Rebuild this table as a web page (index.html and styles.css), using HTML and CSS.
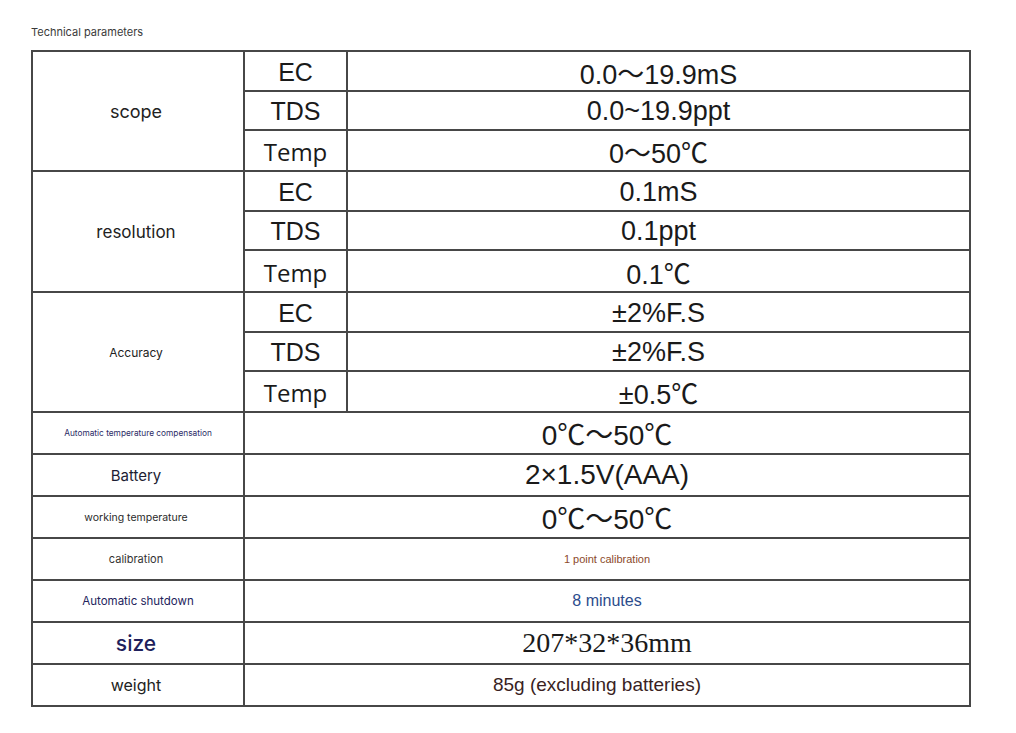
FILE: index.html
```html
<!DOCTYPE html>
<html>
<head>
<meta charset="utf-8">
<link rel="stylesheet" href="styles.css">
</head>
<body>
<div class="page">
  <div class="title">Technical parameters</div>
  <div class="spec">
    <div class="c lab g1 scope">scope</div>
    <div class="c key">EC</div><div class="c val v-arial">0.0～19.9mS</div>
    <div class="c key">TDS</div><div class="c val v-arial">0.0~19.9ppt</div>
    <div class="c key key-temp">Temp</div><div class="c val v-arial">0～50℃</div>

    <div class="c lab g2 resolution">resolution</div>
    <div class="c key">EC</div><div class="c val v-arial">0.1mS</div>
    <div class="c key">TDS</div><div class="c val v-arial">0.1ppt</div>
    <div class="c key key-temp">Temp</div><div class="c val v-arial">0.1℃</div>

    <div class="c lab g3 accuracy">Accuracy</div>
    <div class="c key">EC</div><div class="c val v-arial">±2%F.S</div>
    <div class="c key">TDS</div><div class="c val v-arial">±2%F.S</div>
    <div class="c key key-temp">Temp</div><div class="c val v-arial">±0.5℃</div>

    <div class="c lab atc">Automatic temperature compensation</div>
    <div class="c wide v-yahei">0℃～50℃</div>

    <div class="c lab battery">Battery</div>
    <div class="c wide v-yahei">2×1.5V(AAA)</div>

    <div class="c lab worktemp">working temperature</div>
    <div class="c wide v-yahei">0℃～50℃</div>

    <div class="c lab calib">calibration</div>
    <div class="c wide v-calib">1 point calibration</div>

    <div class="c lab shutdown">Automatic shutdown</div>
    <div class="c wide v-minutes">8 minutes</div>

    <div class="c lab size">size</div>
    <div class="c wide v-size">207*32*36mm</div>

    <div class="c lab weight">weight</div>
    <div class="c wide v-weight">85g (excluding batteries)</div>
  </div>
</div>
</body>
</html>
```
FILE: styles.css
```css
html, body {
  margin: 0;
  padding: 0;
  background: #ffffff;
}

.page {
  padding: 25px 0 0 31px;
}

.title {
  font-family: Inter, "Liberation Sans", sans-serif;
  font-size: 11px;
  line-height: 14px;
  color: #3a3a3a;
  margin-bottom: 11px;
}

.spec {
  display: grid;
  width: 940px;
  box-sizing: border-box;
  grid-template-columns: 210px 101px 621px;
  grid-template-rows: 38px 37px 39px 38px 37px 40px 38px 37px 39px 40px 40px 40px 40px 40px 40px 40px;
  gap: 2px;
  padding: 2px;
  background: #474747;
}

.c {
  background: #ffffff;
  display: flex;
  align-items: center;
  justify-content: center;
  white-space: nowrap;
  overflow: hidden;
}

.lab {
  grid-column: 1;
  font-family: Inter, "Liberation Sans", sans-serif;
  color: #222222;
  padding-right: 4px;
}

.g1 { grid-row: 1 / span 3; }
.g2 { grid-row: 4 / span 3; }
.g3 { grid-row: 7 / span 3; }

.scope { font-size: 18px; }
.resolution { font-size: 17px; }
.accuracy { font-size: 12px; }
.atc { font-size: 8.3px; color: #2c2c66; padding-left: 4px; }
.battery { font-size: 15px; color: #1d1d33; }
.worktemp { font-size: 10.5px; color: #2a2a2a; }
.calib { font-size: 11px; color: #333333; }
.shutdown { font-size: 11.5px; color: #23235c; padding-left: 4px; }
.size { font-size: 21px; color: #1f1f5c; font-weight: 500; }
.weight { font-size: 16px; color: #222222; }

.key {
  grid-column: 2;
  font-family: "Liberation Sans", Arial, sans-serif;
  font-size: 25px;
  color: #1a1a1a;
  padding-top: 2px;
}

.key-temp {
  font-family: "Open Sans", "Liberation Sans", sans-serif;
  font-size: 24px;
  padding-top: 2px;
}

.val {
  grid-column: 3;
}

.wide {
  grid-column: 2 / span 2;
}

.v-arial {
  font-family: "Liberation Sans", "Noto Sans CJK SC", sans-serif;
  font-size: 27px;
  color: #1a1a1a;
  padding-top: 2px;
}

.v-yahei {
  font-family: "Liberation Sans", "Noto Sans CJK SC", sans-serif;
  font-size: 28px;
  color: #1a1a1a;
}

.v-calib {
  font-family: "Liberation Sans", sans-serif;
  font-size: 11px;
  color: #8b4a2b;
}

.v-minutes {
  font-family: "Liberation Sans", sans-serif;
  font-size: 16px;
  color: #2c4c8c;
}

.v-size {
  font-family: "Liberation Serif", "Times New Roman", serif;
  font-size: 28px;
  color: #1a1a1a;
}

.v-weight {
  font-family: "Liberation Sans", sans-serif;
  font-size: 19px;
  color: #3a1f1f;
  padding-right: 20px;
}
```
